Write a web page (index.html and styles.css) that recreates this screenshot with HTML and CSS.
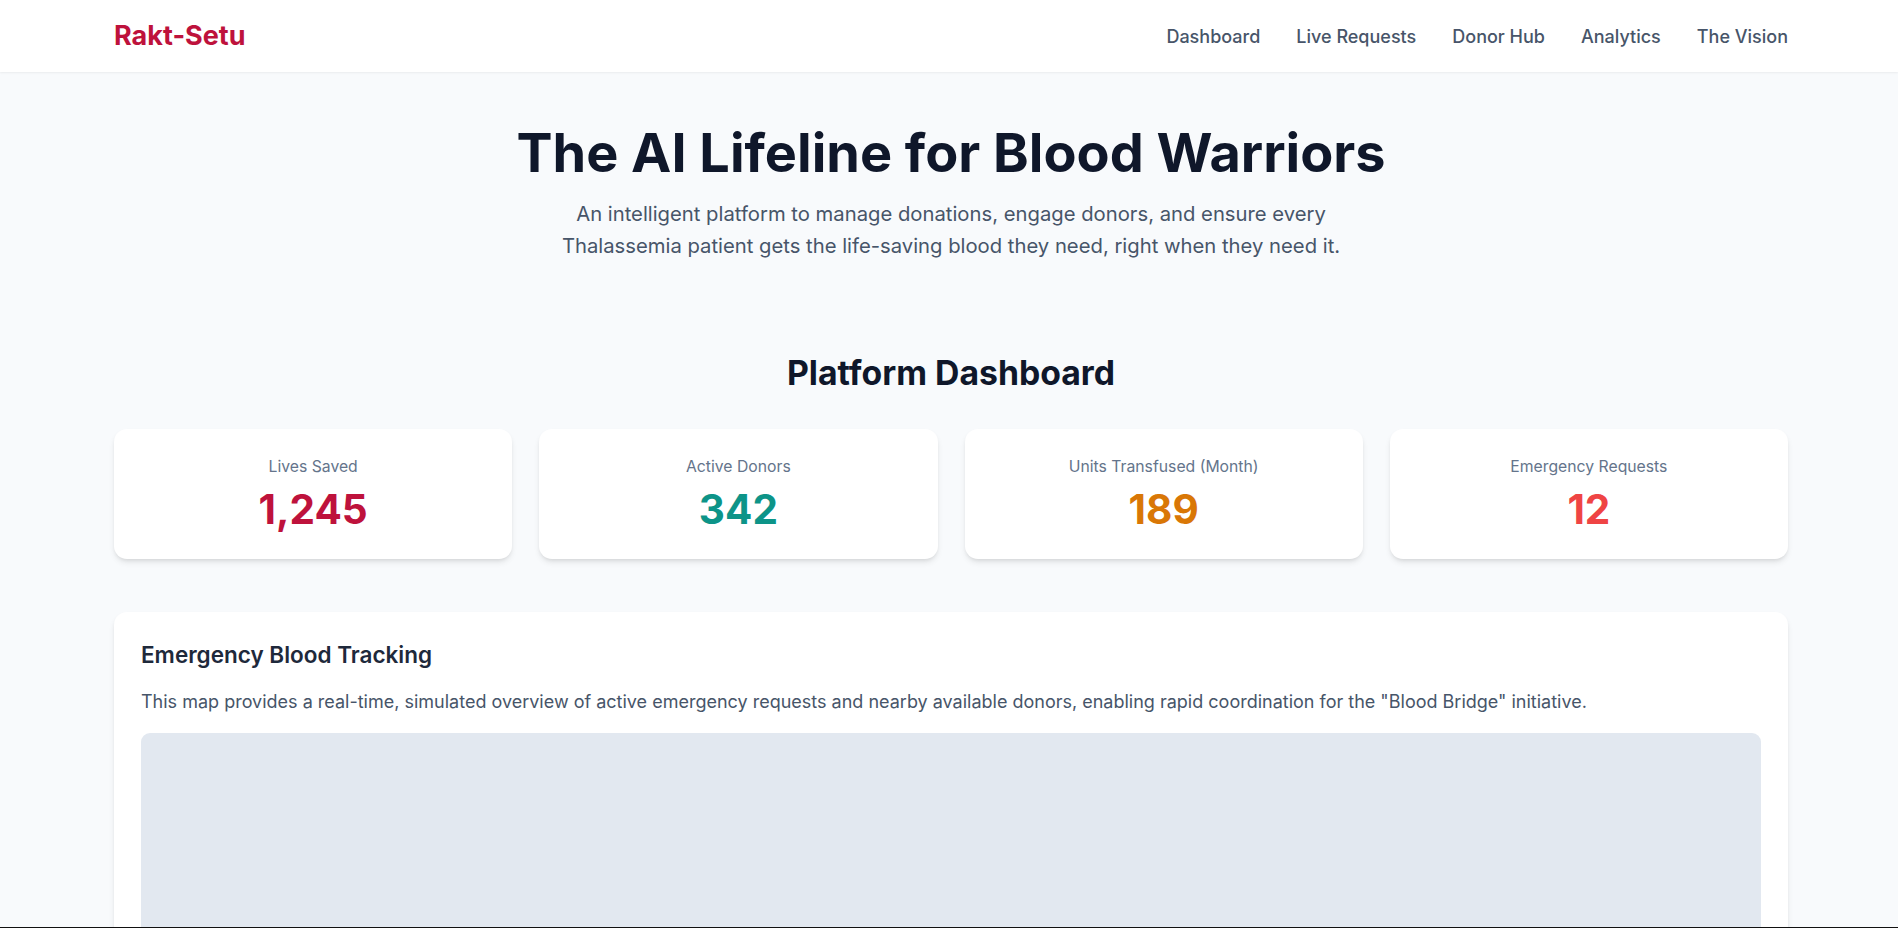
FILE: index.html
```html
<!DOCTYPE html>
<html lang="en">
<head>
<meta charset="utf-8">
<title>Rakt-Setu</title>
<link rel="stylesheet" href="styles.css">
</head>
<body>
<header class="site-header">
  <div class="container header-inner">
    <div class="logo">Rakt-Setu</div>
    <nav class="nav">
      <a href="#">Dashboard</a>
      <a href="#">Live Requests</a>
      <a href="#">Donor Hub</a>
      <a href="#">Analytics</a>
      <a href="#">The Vision</a>
    </nav>
  </div>
</header>

<main class="container">
  <section class="hero">
    <h1 class="hero-title">The AI Lifeline for Blood Warriors</h1>
    <p class="hero-sub">An intelligent platform to manage donations, engage donors, and ensure every Thalassemia patient gets the life-saving blood they need, right when they need it.</p>
  </section>

  <section class="dashboard">
    <h2 class="section-title">Platform Dashboard</h2>
    <div class="stats">
      <div class="stat-card">
        <div class="stat-label">Lives Saved</div>
        <div class="stat-value c-rose">1,245</div>
      </div>
      <div class="stat-card">
        <div class="stat-label">Active Donors</div>
        <div class="stat-value c-teal">342</div>
      </div>
      <div class="stat-card">
        <div class="stat-label">Units Transfused (Month)</div>
        <div class="stat-value c-amber">189</div>
      </div>
      <div class="stat-card">
        <div class="stat-label">Emergency Requests</div>
        <div class="stat-value c-red">12</div>
      </div>
    </div>
  </section>

  <section class="panel">
    <h3 class="panel-title">Emergency Blood Tracking</h3>
    <p class="panel-text">This map provides a real-time, simulated overview of active emergency requests and nearby available donors, enabling rapid coordination for the "Blood Bridge" initiative.</p>
    <div class="map"></div>
  </section>
</main>
<div class="bottom-line"></div>
</body>
</html>
```
FILE: styles.css
```css
* { box-sizing: border-box; }
html, body { margin: 0; padding: 0; }
body {
  font-family: Inter, "Noto Sans", sans-serif;
  background: #f8fafc;
  color: #0f172a;
}
.container {
  padding: 0 110px 0 114px;
}
.site-header {
  background: #ffffff;
  box-shadow: 0 1px 2px rgba(0,0,0,0.06);
}
.header-inner {
  height: 72px;
  display: flex;
  align-items: center;
  justify-content: space-between;
}
.logo {
  font-size: 27px;
  font-weight: 700;
  color: #be123c;
  line-height: 36px;
}
.nav {
  display: flex;
  gap: 36px;
}
.nav a {
  font-size: 18px;
  font-weight: 500;
  color: #475569;
  text-decoration: none;
  line-height: 27px;
}
.hero {
  padding: 54px 0 90px;
  text-align: center;
}
.hero-title {
  margin: 0;
  font-size: 54px;
  line-height: 54px;
  font-weight: 700;
  color: #0f172a;
}
.hero-sub {
  margin: 18px auto 0;
  max-width: 810px;
  font-size: 20.25px;
  line-height: 32.4px;
  color: #475569;
}
.section-title {
  margin: 0 0 36px;
  text-align: center;
  font-size: 33.75px;
  line-height: 40.5px;
  font-weight: 700;
  color: #0f172a;
}
.stats {
  display: grid;
  grid-template-columns: repeat(4, 1fr);
  gap: 27px;
}
.stat-card {
  background: #ffffff;
  border-radius: 13px;
  box-shadow: 0 4px 6px -1px rgba(0,0,0,0.1), 0 2px 4px -2px rgba(0,0,0,0.1);
  padding: 27px;
  text-align: center;
}
.stat-label {
  font-size: 15.75px;
  line-height: 22.5px;
  color: #64748b;
}
.stat-value {
  margin-top: 8px;
  font-size: 40.5px;
  line-height: 45px;
  font-weight: 700;
}
.c-rose { color: #be123c; }
.c-teal { color: #0d9488; }
.c-amber { color: #d97706; }
.c-red { color: #ef4444; }
.panel {
  margin-top: 53px;
  background: #ffffff;
  border-radius: 13px;
  box-shadow: 0 4px 6px -1px rgba(0,0,0,0.1), 0 2px 4px -2px rgba(0,0,0,0.1);
  padding: 27px;
}
.panel-title {
  margin: 0 0 18px;
  font-size: 22.5px;
  line-height: 31.5px;
  font-weight: 600;
  color: #1e293b;
}
.panel-text {
  margin: 0 0 18px;
  font-size: 18px;
  line-height: 27px;
  color: #475569;
}
.map {
  height: 500px;
  background: #e2e8f0;
  border-radius: 9px;
}
.bottom-line {
  position: fixed;
  left: 0;
  right: 0;
  bottom: 0;
  height: 1px;
  background: #111111;
}
```
